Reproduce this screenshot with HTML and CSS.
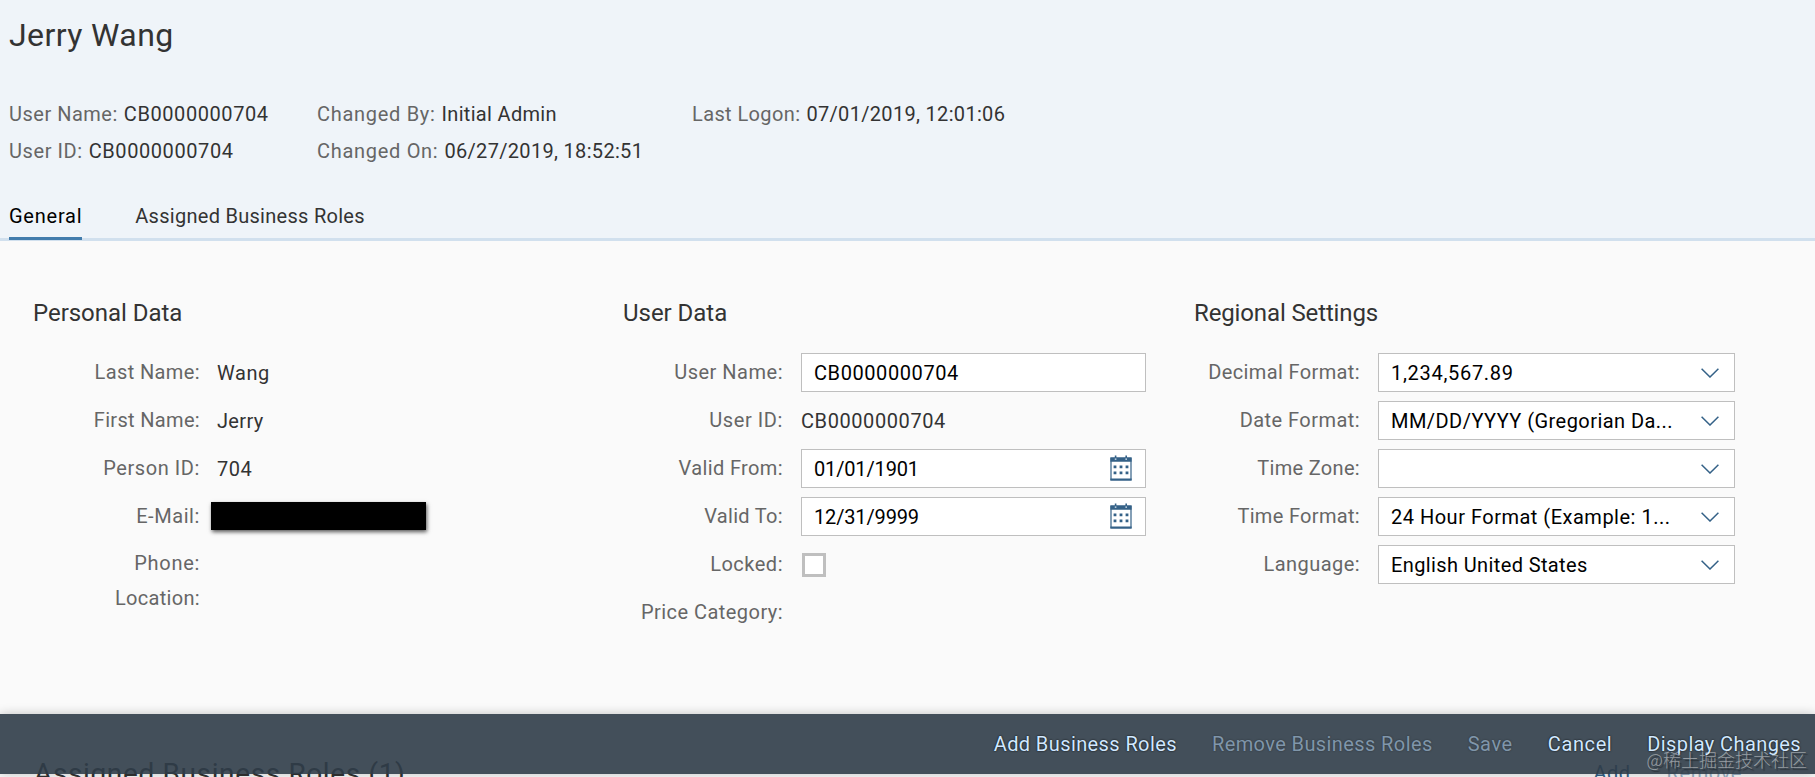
FILE: index.html
```html
<!DOCTYPE html>
<html lang="en">
<head>
<meta charset="utf-8">
<title>Jerry Wang</title>
<link rel="stylesheet" href="styles.css">
</head>
<body>
<svg class="defs" width="0" height="0">
  <symbol id="calendar" viewBox="0 0 22 26">
    <path d="M1 3h20v22H1z" fill="#fff" stroke="#346187" stroke-width="1.2"/>
    <path d="M.4 2.4h21.2v4.4H.4zM.4 23.4h21.2v2.2H.4zM4.8.4h1.6v2.4H4.8zM15.4.4H17v2.4h-1.6z" fill="#346187"/>
    <path d="M4.8 3.4h1.6v1.4H4.8zM15.4 3.4H17v1.4h-1.6z" fill="#dbe8f3"/>
    <path d="M3.6 10.4h2.8v2.8H3.6zM9.6 10.4h2.8v2.8H9.6zM15.6 10.4h2.8v2.8h-2.8zM3.6 16.4h2.8v2.8H3.6zM9.6 16.4h2.8v2.8H9.6zM15.6 16.4h2.8v2.8h-2.8z" fill="#346187"/>
  </symbol>
  <symbol id="arrow" viewBox="0 0 18 10">
    <path d="M.6.7 9 9 17.4.7" fill="none" stroke="#346187" stroke-width="1.5"/>
  </symbol>
</svg>

<header class="header">
  <h1 class="title">Jerry Wang</h1>
  <div class="facts">
    <div class="fact"><span class="key w5">User Name:</span><span class="w6">CB0000000704</span></div>
    <div class="fact"><span class="key w7">Changed By:</span><span class="w3">Initial Admin</span></div>
    <div class="fact"><span class="key w4">Last Logon:</span><span class="w3">07/01/2019, 12:01:06</span></div>
    <div class="fact"><span class="key w6">User ID:</span><span class="w6">CB0000000704</span></div>
    <div class="fact"><span class="key w7">Changed On:</span><span class="w3">06/27/2019, 18:52:51</span></div>
  </div>
  <nav class="tabs">
    <a class="tab tab-active">General</a>
    <a class="tab">Assigned Business Roles</a>
  </nav>
</header>

<main class="content">
  <section class="group personal">
    <h2 class="group-title w0">Personal Data</h2>
    <div class="row"><span class="label w4">Last Name:</span><span class="value w6">Wang</span></div>
    <div class="row"><span class="label w3">First Name:</span><span class="value w3">Jerry</span></div>
    <div class="row"><span class="label w6">Person ID:</span><span class="value w5">704</span></div>
    <div class="row"><span class="label w6">E-Mail:</span><span class="redacted"></span></div>
    <div class="row row-phone"><span class="label w7">Phone:</span></div>
    <div class="row row-location"><span class="label w3">Location:</span></div>
  </section>

  <section class="group user">
    <h2 class="group-title w0">User Data</h2>
    <div class="row"><span class="label w5">User Name:</span><div class="field"><span class="w6">CB0000000704</span></div></div>
    <div class="row"><span class="label w6">User ID:</span><span class="value w6">CB0000000704</span></div>
    <div class="row"><span class="label w4">Valid From:</span><div class="field"><span class="wn">01/01/1901</span><svg class="cal"><use href="#calendar"/></svg></div></div>
    <div class="row"><span class="label w3">Valid To:</span><div class="field"><span class="wn">12/31/9999</span><svg class="cal"><use href="#calendar"/></svg></div></div>
    <div class="row"><span class="label w5">Locked:</span><span class="checkbox"></span></div>
    <div class="row"><span class="label">Price Category:</span></div>
  </section>

  <section class="group regional">
    <h2 class="group-title wr">Regional Settings</h2>
    <div class="row"><span class="label w4">Decimal Format:</span><div class="field"><span class="w7">1,234,567.89</span><svg class="arrow"><use href="#arrow"/></svg></div></div>
    <div class="row"><span class="label">Date Format:</span><div class="field"><span>MM/DD/YYYY (Gregorian Da...</span><svg class="arrow"><use href="#arrow"/></svg></div></div>
    <div class="row"><span class="label w3">Time Zone:</span><div class="field"><span></span><svg class="arrow"><use href="#arrow"/></svg></div></div>
    <div class="row"><span class="label w3">Time Format:</span><div class="field"><span class="w5">24 Hour Format (Example: 1...</span><svg class="arrow"><use href="#arrow"/></svg></div></div>
    <div class="row"><span class="label">Language:</span><div class="field"><span class="w4">English United States</span><svg class="arrow"><use href="#arrow"/></svg></div></div>
  </section>
</main>

<section class="roles">
  <h2 class="roles-title">Assigned Business Roles (1)</h2>
  <div class="roles-actions"><span class="role-add">Add</span><span class="role-remove">Remove</span></div>
</section>

<footer class="footer">
  <span class="btn">Add Business Roles</span>
  <span class="btn btn-off">Remove Business Roles</span>
  <span class="btn btn-off w6">Save</span>
  <span class="btn w6">Cancel</span>
  <span class="btn">Display Changes</span>
</footer>
<div class="watermark">@稀土掘金技术社区</div>
</body>
</html>
```
FILE: styles.css
```css
* { box-sizing: border-box; }
body {
  position: relative;
  width: 1815px;
  height: 777px;
  margin: 0;
  overflow: hidden;
  display: flex;
  flex-direction: column;
  background: #fafafa;
  color: #333;
  font: 20px/24px Roboto, "Liberation Sans", sans-serif;
  letter-spacing: .45px;
  white-space: nowrap;
}
.defs { position: absolute; }

/* Tracking steps */
.wn { letter-spacing: -.15px; }
.w0 { letter-spacing: -.03px; }
.wr { letter-spacing: -.13px; }
.w3 { letter-spacing: .32px; }
.w4 { letter-spacing: .38px; }
.w5 { letter-spacing: .5px; }
.w6 { letter-spacing: .58px; }
.w7 { letter-spacing: .7px; }

.header {
  height: 241px;
  flex: none;
  display: flex;
  flex-direction: column;
  background: #eff4f9;
  border-bottom: 3px solid #d1e0ee;
}
.title {
  margin: 0;
  padding: 11px 0 0 9px;
  font-size: 32px;
  line-height: 49px;
  font-weight: 400;
  letter-spacing: .4px;
}
.facts {
  display: grid;
  grid-template-columns: 308px 375px auto;
  grid-auto-rows: 37px;
  padding: 35px 0 0 9px;
}
.fact { display: flex; align-items: center; gap: 6px; }
.key, .label { color: #666; }
.tabs {
  display: flex;
  gap: 53px;
  margin-top: 29px;
  padding-left: 9px;
}
.tab { height: 42px; line-height: 36px; letter-spacing: .28px; }
.tab-active {
  border-bottom: 3px solid #427cac;
  color: #000;
  letter-spacing: .75px;
}

.content { display: flex; height: 500px; flex: none; padding-top: 55px; }
.group { padding-left: 33px; }
.personal { width: 590px; }
.user { width: 571px; }
.regional { width: 600px; }
.group-title {
  margin: 0 0 17px;
  font-size: 24px;
  line-height: 35px;
  font-weight: 400;
}
.row { display: flex; height: 48px; align-items: center; }
.label { width: 167px; flex: none; text-align: right; }
.value { margin: 2px 0 0 18px; }
.personal .value { margin-left: 17px; }
.user .label { width: 160px; }
.regional .label { width: 166px; }
.row-phone { height: 46px; }
.row-location { height: 24px; }
.redacted {
  width: 215px;
  height: 28px;
  margin-left: 11px;
  background: #000;
  box-shadow: 1px 2px 4px rgba(0, 0, 0, .65);
}
.field {
  display: flex;
  align-items: center;
  justify-content: space-between;
  width: 345px;
  height: 39px;
  margin: 0 0 0 18px;
  padding: 1px 13px 0 12px;
  background: #fff;
  border: 1px solid #bfbfbf;
  color: #000;
}
.regional .field { width: 357px; padding: 1px 15px 0 12px; }
.cal { width: 22px; height: 26px; margin-top: -1px; }
.arrow { width: 18px; height: 10px; margin-top: 1px; }
.checkbox {
  width: 24px;
  height: 24px;
  margin: 2px 0 0 19px;
  background: #fff;
  border: 3px solid #bfbfbf;
}

/* Next section, mostly hidden under the footer bar */
.roles {
  display: flex;
  flex: none;
  justify-content: space-between;
  padding: 14px 73px 0 34px;
}
.roles-title { margin: 0; font-size: 28px; line-height: 38px; font-weight: 400; letter-spacing: .63px; }
.roles-actions { display: flex; gap: 36px; padding-top: 6px; color: #346187; }
.role-remove { color: #9ab0c3; letter-spacing: .6px; }

.footer {
  position: absolute;
  left: 0;
  right: 0;
  bottom: 3px;
  height: 60px;
  display: flex;
  align-items: center;
  justify-content: flex-end;
  gap: 35px;
  padding-right: 14px;
  background: rgba(47, 60, 72, .9);
  box-shadow: 0 0 10px rgba(0, 0, 0, .22);
  color: #d1e8ff;
  text-shadow: 0 0 2px #000;
}
.btn { letter-spacing: .4px; }
.btn.w6 { letter-spacing: .6px; }
.btn-off { color: #8096aa; text-shadow: 0 0 2px rgba(0, 0, 0, .4); }
.watermark {
  position: absolute;
  right: 8px;
  bottom: 5px;
  color: rgba(255, 255, 255, .46);
  font: 300 18px/26px "Noto Sans CJK SC", sans-serif;
  letter-spacing: 0;
  text-shadow: 2px 2px 1px rgba(0, 0, 0, .35);
}
```
